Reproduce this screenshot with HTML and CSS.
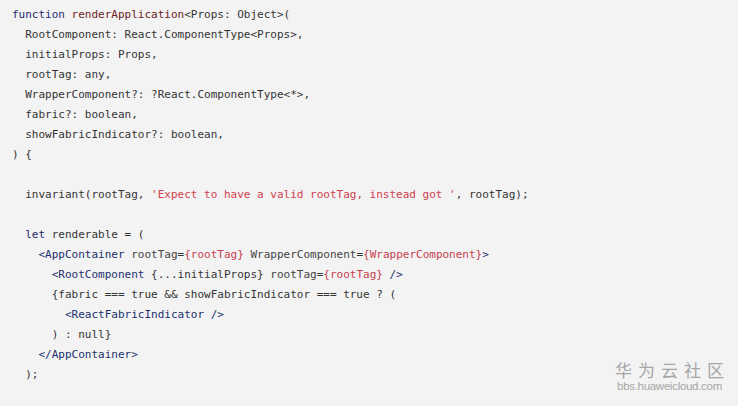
FILE: index.html
```html
<!DOCTYPE html>
<html lang="en">
<head>
<meta charset="utf-8">
<title>renderApplication</title>
<link rel="stylesheet" href="styles.css">
</head>
<body>
<main class="page">
<pre class="code"><code><span class="kw">function</span> <span class="fn">renderApplication</span>&lt;Props: Object&gt;(
  RootComponent: React.ComponentType&lt;Props&gt;,
  initialProps: Props,
  rootTag: any,
  WrapperComponent?: ?React.ComponentType&lt;*&gt;,
  fabric?: boolean,
  showFabricIndicator?: boolean,
) {

  invariant(rootTag, <span class="str">'Expect to have a valid rootTag, instead got '</span>, rootTag);

  <span class="kw">let</span> renderable = (
    <span class="tag">&lt;AppContainer</span> <span class="attr">rootTag</span>=<span class="val">{rootTag}</span> <span class="attr">WrapperComponent</span>=<span class="val">{WrapperComponent}</span><span class="tag">&gt;</span>
      <span class="tag">&lt;RootComponent</span> {...initialProps} <span class="attr">rootTag</span>=<span class="val">{rootTag}</span> <span class="tag">/&gt;</span>
      {fabric === true &amp;&amp; showFabricIndicator === true ? (
        <span class="tag">&lt;ReactFabricIndicator</span> <span class="tag">/&gt;</span>
      ) : null}
    <span class="tag">&lt;/AppContainer&gt;</span>
  );</code></pre>
<div class="watermark">
  <div class="wm-cn">华为云社区</div>
  <div class="wm-en">bbs.huaweicloud.com</div>
</div>
</main>
</body>
</html>
```
FILE: styles.css
```css
html, body {
  margin: 0;
  padding: 0;
  background: #f3f3f3;
}
.page {
  position: relative;
  width: 738px;
  height: 406px;
  overflow: hidden;
}
.code {
  margin: 0;
  padding: 5px 12px 0 12px;
  font-family: "DejaVu Sans Mono", "Liberation Mono", monospace;
  font-size: 11px;
  line-height: 20px;
  color: #333;
}
.kw { color: #1f2a6e; }
.fn { color: #6b1d1d; }
.str { color: #d0404c; }
.tag { color: #22306e; }
.attr { color: #444; }
.val { color: #c8404f; }
.watermark {
  position: absolute;
  right: 14px;
  bottom: 13px;
  display: flex;
  flex-direction: column;
  align-items: center;
  color: #a6a6a6;
}
.wm-cn {
  font-family: "Noto Sans CJK SC", sans-serif;
  font-size: 17px;
  line-height: 20px;
  letter-spacing: 6px;
  margin-right: -6px;
}
.wm-en {
  font-family: "Liberation Sans", Arial, sans-serif;
  font-size: 11.5px;
  line-height: 13px;
  letter-spacing: -0.3px;
}
```
